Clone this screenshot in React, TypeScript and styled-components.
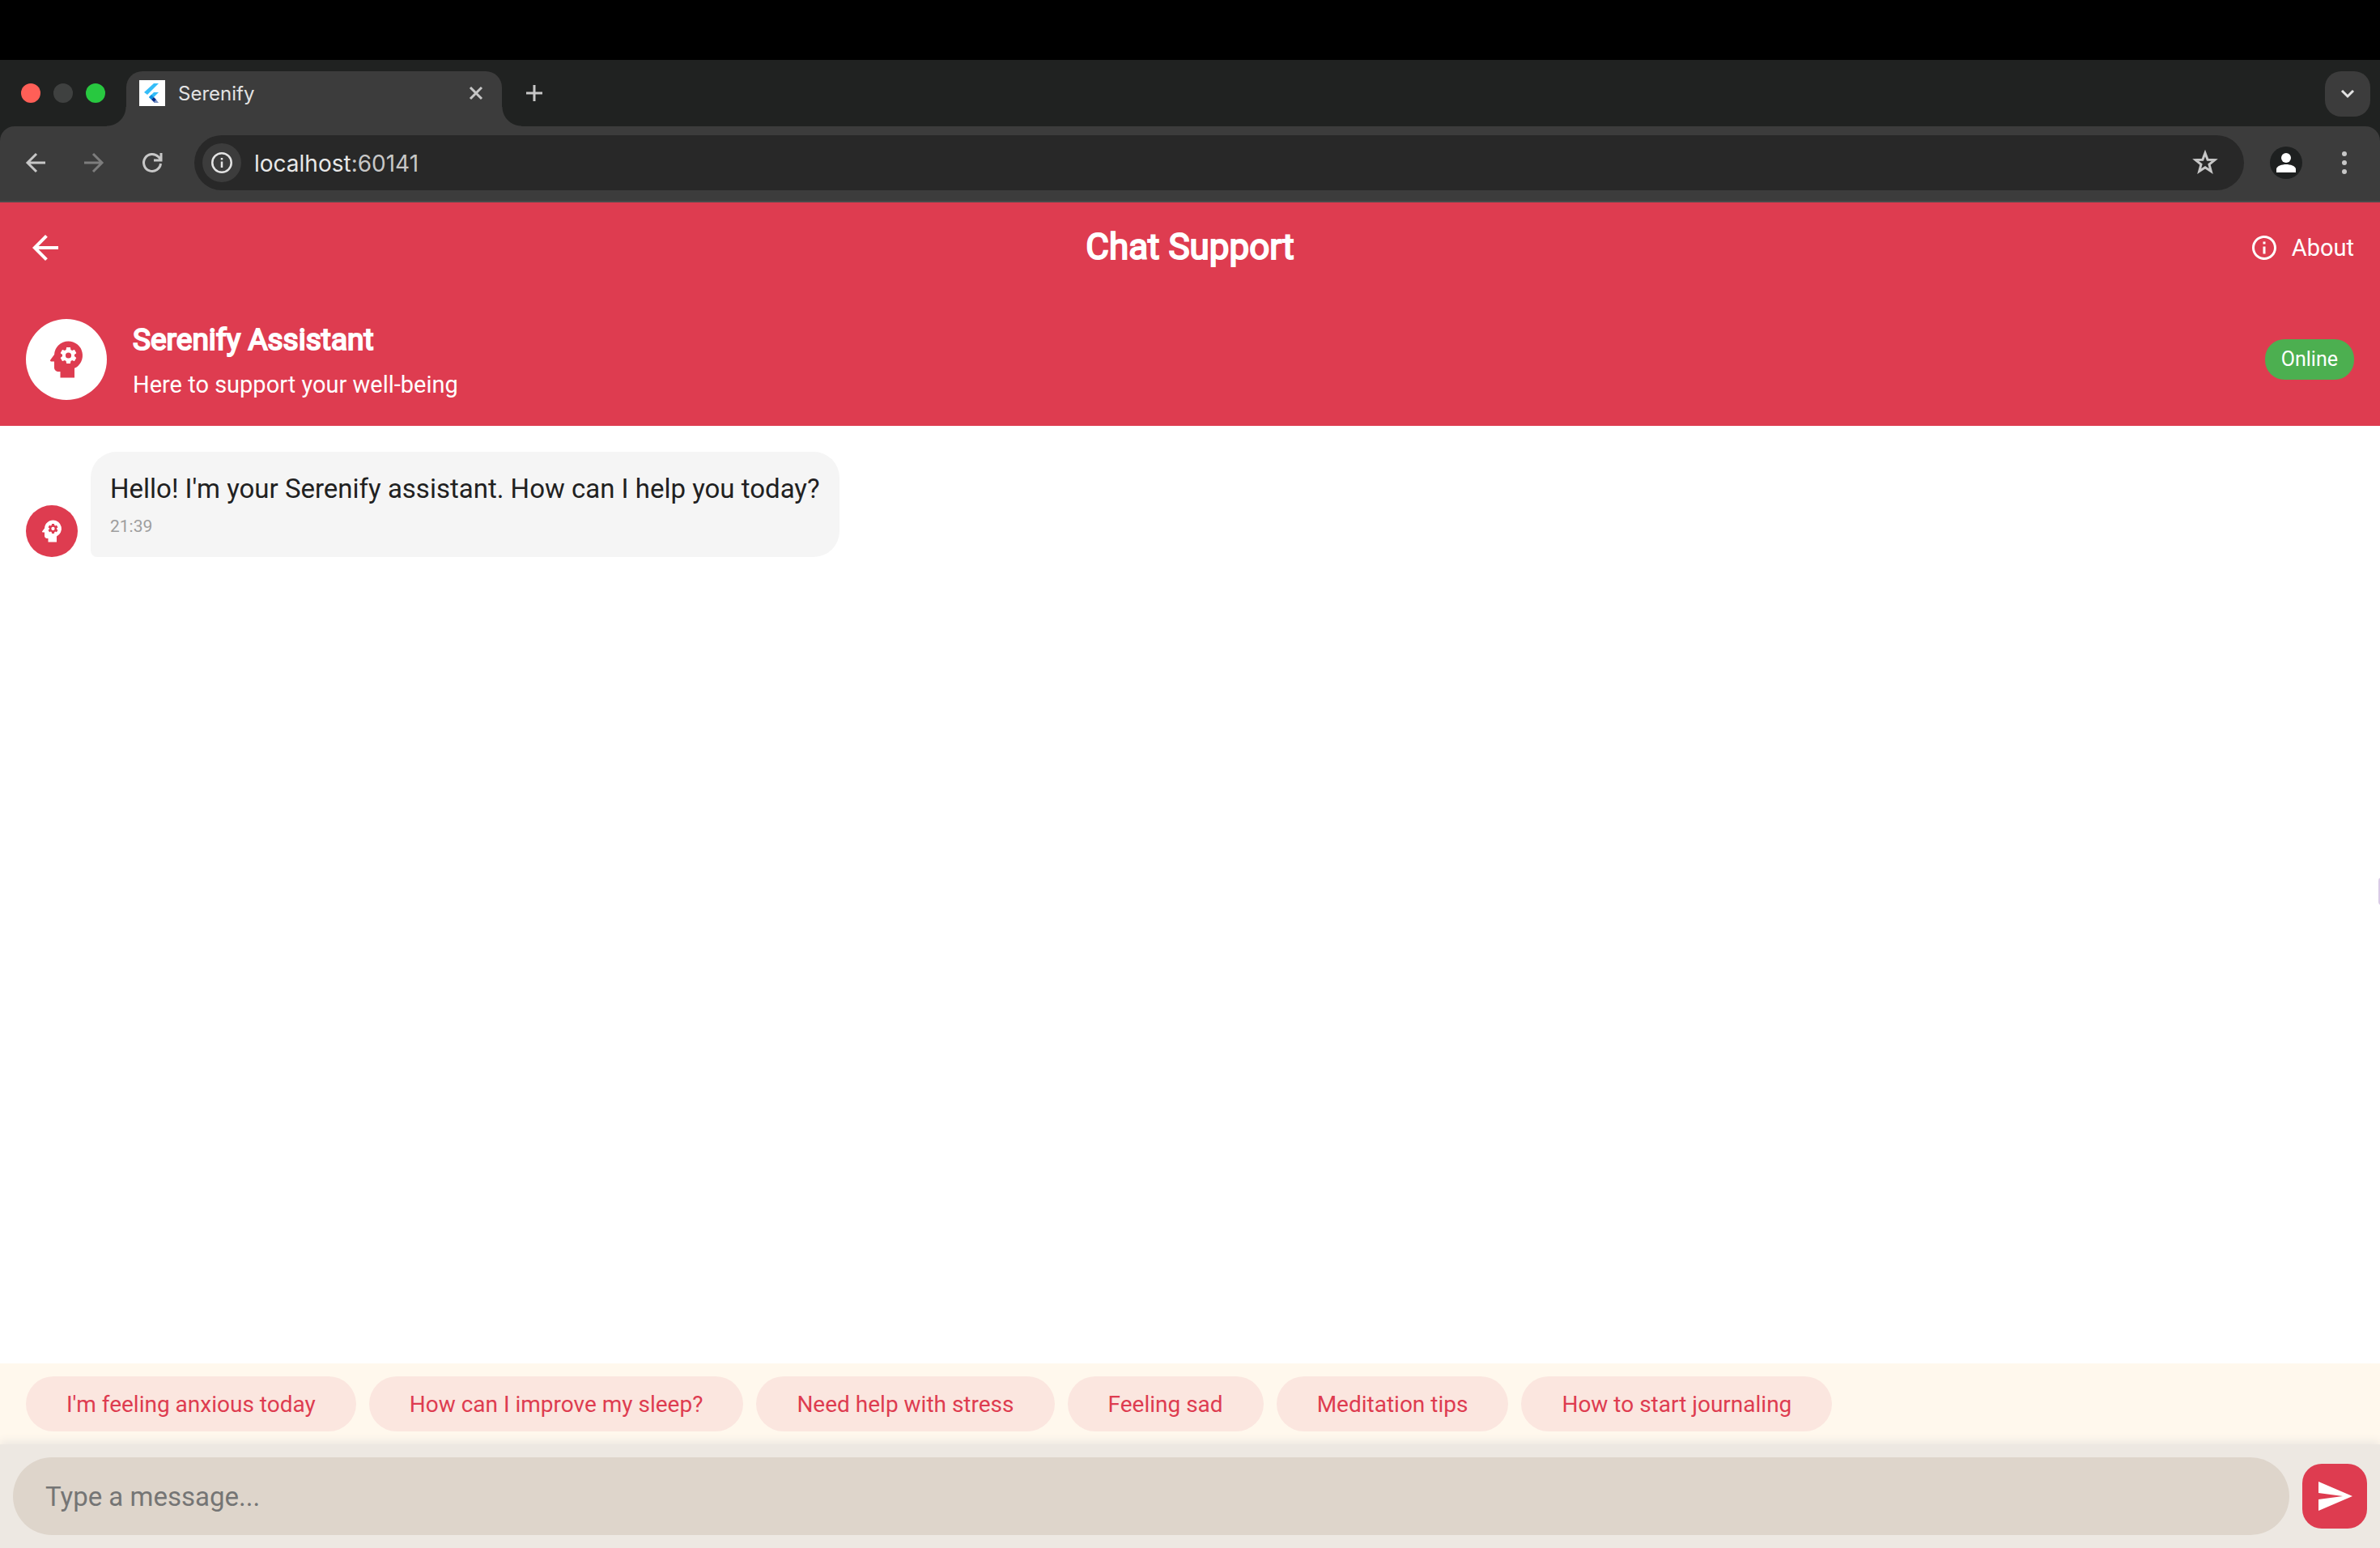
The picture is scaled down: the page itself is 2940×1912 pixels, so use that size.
import React from "react";
import styled, { createGlobalStyle, css } from "styled-components";
import { MdArrowBack, MdInfoOutline, MdPsychology, MdSend } from "react-icons/md";

const color = {
  brand: "#de3c50",
  strip: "#202221",
  chrome: "#3c3c3c",
  omnibox: "#282828",
  icon: "#c7c7c7",
};

const GlobalStyle = createGlobalStyle`
  *, *::before, *::after { box-sizing: border-box; }
  body { margin: 0; background: #000; font-family: Roboto, "Noto Sans", sans-serif; }
  button, input { font: inherit; border: 0; margin: 0; padding: 0; }
  button { background: none; color: inherit; cursor: pointer; }
  svg { display: block; flex: none; }
`;

const Page = styled.div`
  position: relative;
  display: flex;
  flex-direction: column;
  min-height: 100vh;
  padding-top: 74px;
  overflow: hidden;
`;

/* Browser frame */

const browserFont = css`
  font-family: Inter, "Open Sans", sans-serif;
`;

const TabStrip = styled.div`
  ${browserFont}
  display: flex;
  align-items: flex-end;
  height: 82px;
  padding: 0 12px 0 26px;
  background: ${color.strip};
`;

const WindowButtons = styled.div`
  display: flex;
  gap: 16px;
  align-self: center;
  margin-right: 26px;
`;

const WindowButton = styled.button<{ $color: string }>`
  width: 24px;
  height: 24px;
  border-radius: 50%;
  background: ${(p) => p.$color};
`;

const Tab = styled.div`
  position: relative;
  display: flex;
  align-items: center;
  width: 464px;
  height: 68px;
  padding: 0 20px 14px 16px;
  border-radius: 20px 20px 0 0;
  background: ${color.chrome};

  &::before,
  &::after {
    content: "";
    position: absolute;
    bottom: 0;
    width: 24px;
    height: 24px;
  }
  &::before {
    right: 100%;
    background: radial-gradient(circle at 0 0, transparent 23px, ${color.chrome} 24px);
  }
  &::after {
    left: 100%;
    background: radial-gradient(circle at 100% 0, transparent 23px, ${color.chrome} 24px);
  }
`;

const TabTitle = styled.span`
  flex: 1;
  margin-left: 16px;
  padding-top: 2px;
  font-size: 24px;
  line-height: 32px;
  color: #e3e3e3;
`;

const StripButton = styled.button`
  display: grid;
  place-items: center;
  width: 24px;
  height: 24px;
  color: ${color.icon};
`;

const NewTab = styled(StripButton)`
  align-self: center;
  margin-left: 28px;
`;

const TabSearch = styled.button`
  display: grid;
  place-items: center;
  width: 56px;
  height: 56px;
  margin: 0 0 12px auto;
  border-radius: 20px;
  background: ${color.chrome};
  color: #e3e3e3;
`;

const ToolbarBack = styled.div`
  background: ${color.strip};
`;

const Toolbar = styled.div`
  ${browserFont}
  display: flex;
  align-items: center;
  height: 94px;
  padding: 0 28px 2px;
  border-bottom: 2px solid #4a4a4a;
  border-radius: 18px 18px 0 0;
  background: ${color.chrome};
`;

const NavButtons = styled.div`
  display: flex;
  gap: 40px;
  margin-right: 36px;
`;

const NavButton = styled.button<{ $dim?: boolean }>`
  display: grid;
  place-items: center;
  width: 32px;
  height: 32px;
  color: ${(p) => (p.$dim ? "#7d7d7d" : color.icon)};
`;

const Omnibox = styled.div`
  display: flex;
  flex: 1;
  align-items: center;
  height: 68px;
  padding: 0 32px 0 10px;
  border-radius: 34px;
  background: ${color.omnibox};
  color: ${color.icon};
`;

const SiteInfo = styled.button`
  display: grid;
  place-items: center;
  width: 48px;
  height: 48px;
  margin-right: 16px;
  border-radius: 50%;
  background: ${color.chrome};
  color: #e3e3e3;
`;

const Address = styled.span`
  flex: 1;
  padding-top: 2px;
  font-size: 28px;
  line-height: 36px;
`;

const Host = styled.span`
  color: #e8e8e8;
`;

const Profile = styled.button`
  display: block;
  width: 40px;
  height: 40px;
  margin: 0 36px 0 32px;
  border-radius: 50%;
  background: #1e2020;
`;

/* Chat screen */

const Screen = styled.div`
  display: flex;
  flex: 1;
  flex-direction: column;
  background: #fff;
`;

const Header = styled.header`
  background: ${color.brand};
  color: #fff;
`;

const AppBar = styled.div`
  display: grid;
  grid-template-columns: 1fr auto 1fr;
  align-items: center;
  height: 112px;
  padding: 0 32px;
`;

const BackButton = styled.button`
  justify-self: start;
`;

const boldStroke = css`
  margin: 0;
  font-weight: 400;
  -webkit-text-stroke: 2px currentColor;
`;

const Title = styled.h1`
  ${boldStroke}
  padding-bottom: 2px;
  font-size: 44px;
  line-height: 56px;
`;

const AboutButton = styled.button`
  display: flex;
  align-items: center;
  justify-self: end;
  gap: 16px;
  font-size: 29px;
  line-height: 40px;
`;

const AssistantBar = styled.div`
  display: flex;
  align-items: center;
  gap: 32px;
  padding: 32px;
`;

const Avatar = styled.div<{ $small?: boolean }>`
  display: grid;
  flex: none;
  place-items: center;
  width: ${(p) => (p.$small ? 64 : 100)}px;
  height: ${(p) => (p.$small ? 64 : 100)}px;
  border-radius: 50%;
  background: ${(p) => (p.$small ? color.brand : "#fff")};
  color: ${(p) => (p.$small ? "#fff" : color.brand)};
`;

const Identity = styled.div`
  display: flex;
  flex: 1;
  flex-direction: column;
  gap: 10px;
`;

const Name = styled.h2`
  ${boldStroke}
  font-size: 37px;
  line-height: 52px;
`;

const Tagline = styled.p`
  margin: 0;
  font-size: 29px;
  line-height: 38px;
`;

const Status = styled.span`
  padding: 8px 20px;
  border-radius: 24px;
  background: #4caf50;
  font-size: 25px;
  line-height: 34px;
`;

const Messages = styled.main`
  flex: 1;
  padding: 32px;
`;

const MessageRow = styled.div`
  display: flex;
  align-items: flex-end;
  gap: 16px;
`;

const Bubble = styled.div`
  display: flex;
  flex-direction: column;
  gap: 8px;
  padding: 22px 24px 24px;
  border-radius: 32px 32px 32px 8px;
  background: #f5f5f5;
`;

const MessageText = styled.p`
  margin: 0;
  font-size: 33px;
  line-height: 48px;
  color: #212121;
`;

const Time = styled.time`
  font-size: 21px;
  line-height: 28px;
  color: #9e9e9e;
`;

const Suggestions = styled.div`
  display: flex;
  gap: 16px;
  padding: 16px 32px;
  background: #fff8ed;
`;

const Chip = styled.button`
  height: 68px;
  padding: 2px 50px 0;
  border-radius: 34px;
  background: #fbe6df;
  color: ${color.brand};
  font-size: 28px;
  line-height: 40px;
  white-space: nowrap;
`;

const Composer = styled.form`
  display: flex;
  align-items: center;
  gap: 16px;
  padding: 16px;
  background: #ede8e2;
  box-shadow: 0 -4px 10px #ede8e2;
`;

const MessageInput = styled.input`
  flex: 1;
  min-width: 0;
  height: 96px;
  padding: 0 40px;
  border-radius: 48px;
  outline: 0;
  background: #ded5cb;
  color: #212121;
  font-size: 33px;

  &::placeholder {
    color: #757575;
    opacity: 1;
  }
`;

const SendButton = styled.button`
  display: grid;
  flex: none;
  place-items: center;
  width: 80px;
  height: 80px;
  border-radius: 24px;
  background: ${color.brand};
  color: #fff;
`;

const EdgeHandle = styled.div`
  position: absolute;
  top: 1084px;
  right: -6px;
  width: 8px;
  height: 34px;
  border-radius: 4px;
  background: #d9cbe6;
`;

const Stroke = ({ size, d, width = 3 }: { size: number; d: string; width?: number }) => (
  <svg width={size} height={size} viewBox={`0 0 ${size} ${size}`} fill="none" stroke="currentColor" strokeWidth={width}>
    <path d={d} />
  </svg>
);

const FlutterIcon = () => (
  <svg width="32" height="32" viewBox="0 0 32 32">
    <path fill="#fff" d="M0 0h32v32H0z" />
    <path fill="#35bdf8" d="M18 4h6L10 18l-4-3z" />
    <path fill="#35bdf8" d="M18 15h6l-6 6-3 3-3-3z" />
    <path fill="#0d8fe0" d="m12 21 3-3 3 3-3 3z" />
    <path fill="#0a2f8c" d="m15 24 3-3 3 3-2 4z" />
    <path fill="#7a93c4" d="m18 27 3-3 3 4h-5z" />
  </svg>
);

const suggestions = [
  "I'm feeling anxious today",
  "How can I improve my sleep?",
  "Need help with stress",
  "Feeling sad",
  "Meditation tips",
  "How to start journaling",
];

export default function App() {
  return (
    <Page>
      <GlobalStyle />
      <TabStrip>
        <WindowButtons>
          <WindowButton $color="#ff5f57" aria-label="Close window" />
          <WindowButton $color="#3f4140" aria-label="Minimize window" />
          <WindowButton $color="#28c840" aria-label="Zoom window" />
        </WindowButtons>
        <Tab>
          <FlutterIcon />
          <TabTitle>Serenify</TabTitle>
          <StripButton aria-label="Close tab">
            <Stroke size={24} d="M5 5l14 14M19 5L5 19" />
          </StripButton>
        </Tab>
        <NewTab aria-label="New tab">
          <Stroke size={24} d="M12 2v20M2 12h20" />
        </NewTab>
        <TabSearch aria-label="Search tabs">
          <Stroke size={24} d="M5 8l7 7 7-7" />
        </TabSearch>
      </TabStrip>
      <ToolbarBack>
        <Toolbar>
          <NavButtons>
            <NavButton aria-label="Back">
              <Stroke size={32} d="M28 16H7M17 5L6 16l11 11" />
            </NavButton>
            <NavButton $dim aria-label="Forward">
              <Stroke size={32} d="M4 16h21M15 5l11 11-11 11" />
            </NavButton>
            <NavButton aria-label="Reload">
              <Stroke size={32} d="M26.500 17A10.500 10.500 0 1 1 23.500 8.500L27 12M27 4v9h-9" />
            </NavButton>
          </NavButtons>
          <Omnibox>
            <SiteInfo aria-label="View site information">
              <svg width="28" height="28" viewBox="0 0 28 28" fill="none" stroke="currentColor" strokeWidth="2.500">
                <circle cx="14" cy="14" r="11.750" />
                <path d="M14 12.500v7.500M14 8v2.500" />
              </svg>
            </SiteInfo>
            <Address>
              <Host>localhost</Host>:60141
            </Address>
            <NavButton aria-label="Bookmark this tab">
              <svg width="32" height="32" viewBox="0 0 32 32" fill="none" stroke="currentColor" strokeWidth="3">
                <path d="M16 4l3.100 8.200 8.700.400-6.800 5.500 2.300 8.500L16 21.800l-7.300 4.800 2.300-8.500-6.800-5.500 8.700-.400z" />
              </svg>
            </NavButton>
          </Omnibox>
          <Profile aria-label="Profile">
            <svg width="40" height="40" viewBox="0 0 40 40" fill="#fff">
              <circle cx="20" cy="14" r="6" />
              <path d="M8 32v-4c0-4 7-6 12-6s12 2 12 6v4z" />
            </svg>
          </Profile>
          <NavButton aria-label="Browser menu">
            <svg width="32" height="32" viewBox="0 0 32 32" fill="currentColor">
              <circle cx="16" cy="5" r="3" />
              <circle cx="16" cy="16" r="3" />
              <circle cx="16" cy="27" r="3" />
            </svg>
          </NavButton>
        </Toolbar>
      </ToolbarBack>
      <Screen>
        <Header>
          <AppBar>
            <BackButton aria-label="Go back">
              <MdArrowBack size={48} />
            </BackButton>
            <Title>Chat Support</Title>
            <AboutButton>
              <MdInfoOutline size={36} />
              About
            </AboutButton>
          </AppBar>
          <AssistantBar>
            <Avatar>
              <MdPsychology size={60} />
            </Avatar>
            <Identity>
              <Name>Serenify Assistant</Name>
              <Tagline>Here to support your well-being</Tagline>
            </Identity>
            <Status>Online</Status>
          </AssistantBar>
        </Header>
        <Messages>
          <MessageRow>
            <Avatar $small>
              <MdPsychology size={36} />
            </Avatar>
            <Bubble>
              <MessageText>Hello! I'm your Serenify assistant. How can I help you today?</MessageText>
              <Time>21:39</Time>
            </Bubble>
          </MessageRow>
        </Messages>
        <Suggestions>
          {suggestions.map((text) => (
            <Chip key={text}>{text}</Chip>
          ))}
        </Suggestions>
        <Composer onSubmit={(e) => e.preventDefault()}>
          <MessageInput aria-label="Message" placeholder="Type a message..." />
          <SendButton aria-label="Send">
            <MdSend size={48} />
          </SendButton>
        </Composer>
      </Screen>
      <EdgeHandle />
    </Page>
  );
}
